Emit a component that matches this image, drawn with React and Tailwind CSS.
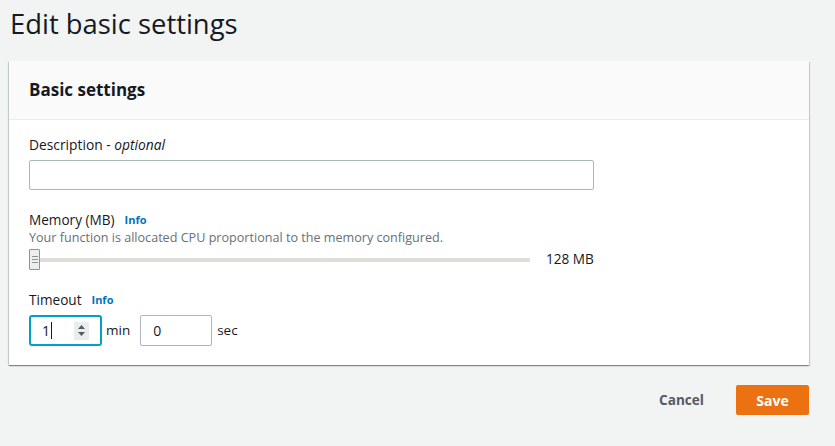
export default function App() {
  const font = { fontFamily: '"Open Sans", "Noto Sans", Arial, sans-serif' };
  return (
    <div className="w-[835px] h-[446px] bg-[#f2f3f3] text-[#16191f] overflow-hidden" style={font}>
      <div className="pl-[9px] w-[809px]">
        <h1 className="h-[50px] pt-[2px] pl-[1px] text-[27.4px] leading-[44px] font-normal text-[#16191f]">Edit basic settings</h1>
        <div className="mt-[11px] bg-white shadow-[0_1px_1px_0_rgba(0,28,36,0.3),1px_1px_1px_0_rgba(0,28,36,0.15),-1px_1px_1px_0_rgba(0,28,36,0.15)]">
          <div className="h-[59px] bg-[#fafafa] border-b border-[#eaeded] flex items-center pl-[20px]">
            <h2 className="text-[17px] font-bold leading-[22px] text-[#16191f]">Basic settings</h2>
          </div>
          <div className="pl-[20px] pt-[15px] pb-[19px]">
            <div className="text-[13.8px] leading-[20px] text-[#16191f]">
              Description - <i>optional</i>
            </div>
            <div className="mt-[5px] w-[565px] h-[30px] border border-[#aab7b8] rounded-[2px] bg-white"></div>

            <div className="mt-[20px] flex items-center gap-[10px] text-[13.6px] leading-[20px]">
              <span>Memory (MB)</span>
              <span className="text-[11px] font-bold text-[#0073bb]">Info</span>
            </div>
            <div className="text-[12.6px] leading-[16px] text-[#687078]">
              Your function is allocated CPU proportional to the memory configured.
            </div>
            <div className="mt-[3px] flex items-center h-[21px]">
              <div className="relative w-[501px] h-[21px] flex items-center">
                <div className="w-full h-[4px] bg-[#e0ddd8]"></div>
                <div className="absolute left-0 top-0 w-[11px] h-[21px] bg-[#eeeeee] border border-[#879596] rounded-[1px] flex flex-col items-center justify-center gap-[2px]">
                  <div className="w-[6px] h-px bg-[#879596]"></div>
                  <div className="w-[6px] h-px bg-[#879596]"></div>
                  <div className="w-[6px] h-px bg-[#879596]"></div>
                </div>
              </div>
              <span className="ml-[16px] text-[13.6px] text-[#16191f]">128 MB</span>
            </div>

            <div className="mt-[20px] flex items-center gap-[10px] text-[13.6px] leading-[20px]">
              <span>Timeout</span>
              <span className="text-[11px] font-bold text-[#0073bb]">Info</span>
            </div>
            <div className="mt-[5px] flex items-center h-[31px]">
              <div className="w-[73px] h-[31px] border-2 border-[#00a1c9] rounded-[3px] flex items-center pl-[11px] pr-[11px] justify-between">
                <span className="flex items-center text-[14px]">
                  1<span className="inline-block w-px h-[17px] bg-[#16191f] ml-[1px]"></span>
                </span>
                <span className="w-[15px] h-[18px] bg-[#eaeded] flex flex-col items-center justify-center gap-[3px]">
                  <svg width="7" height="4" viewBox="0 0 7 4"><path d="M0 4 L3.5 0 L7 4 Z" fill="#545b64" /></svg>
                  <svg width="7" height="4" viewBox="0 0 7 4"><path d="M0 0 L3.5 4 L7 0 Z" fill="#545b64" /></svg>
                </span>
              </div>
              <span className="ml-[4px] text-[13.5px]">min</span>
              <div className="ml-[10px] w-[72px] h-[31px] border border-[#aab7b8] rounded-[2px] flex items-center pl-[12px] text-[14px]">0</div>
              <span className="ml-[5px] text-[13.5px]">sec</span>
            </div>
          </div>
        </div>
        <div className="mt-[20px] flex justify-end items-center">
          <span className="text-[13.6px] font-bold text-[#545b64] mr-[32px]">Cancel</span>
          <button className="w-[73px] h-[30px] bg-[#ec7211] rounded-[2px] text-white text-[14px] font-bold">Save</button>
        </div>
      </div>
    </div>
  );
}
